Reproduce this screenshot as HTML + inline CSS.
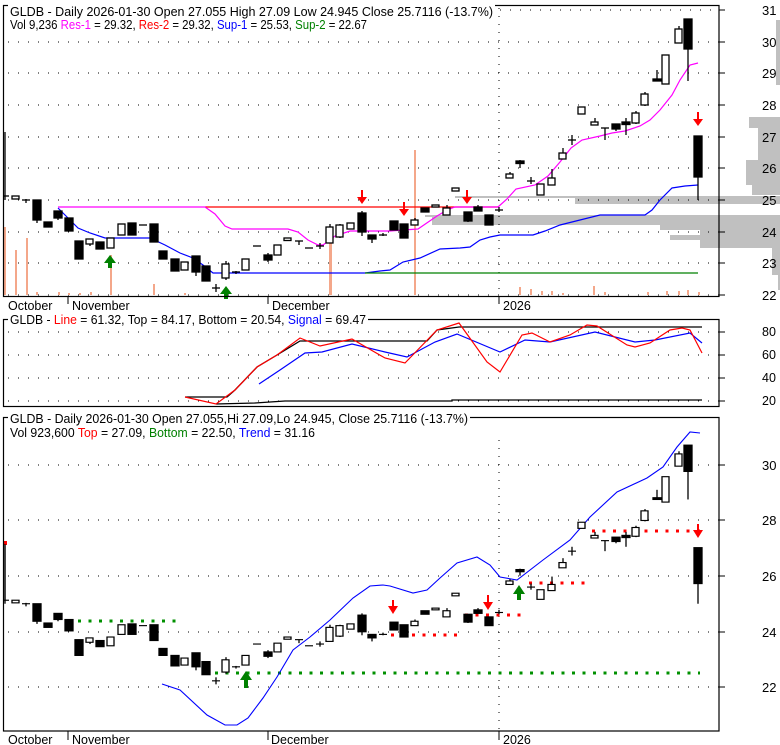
<!DOCTYPE html>
<html><head><meta charset="utf-8"><style>
html,body{margin:0;padding:0;background:#fff;width:780px;height:745px;overflow:hidden}
svg{display:block;font-family:"Liberation Sans",Arial,sans-serif}
</style></head><body>
<svg width="780" height="745" viewBox="0 0 780 745" xmlns="http://www.w3.org/2000/svg">
<defs>
<g id="candles" stroke="#000" stroke-width="1.3">
<line x1="5" y1="132" x2="5" y2="200" vector-effect="non-scaling-stroke"/><line x1="3" y1="196" x2="9" y2="196"/>
<rect x="12" y="196" width="7" height="3" fill="#fff"/>
<line x1="26" y1="199" x2="26" y2="203"/><line x1="22" y1="200" x2="30" y2="200"/>
<line x1="37" y1="200" x2="37" y2="223"/><rect x="33" y="200" width="8" height="20" fill="#000"/>
<rect x="44" y="222" width="8" height="5" fill="#000"/>
<line x1="58" y1="211" x2="58" y2="220"/><rect x="54" y="211" width="8" height="7" fill="#000"/>
<rect x="65" y="218" width="8" height="13" fill="#000"/>
<rect x="75" y="241" width="8" height="18" fill="#000"/>
<line x1="90" y1="239" x2="90" y2="246"/><rect x="86" y="239" width="7" height="5" fill="#fff"/>
<rect x="96" y="242" width="8" height="7" fill="#000"/>
<rect x="107" y="238" width="7" height="10" fill="#fff"/>
<rect x="118" y="224" width="7" height="11" fill="#fff"/>
<rect x="128" y="223" width="8" height="12" fill="#000"/>
<line x1="139" y1="225" x2="147" y2="225"/>
<rect x="150" y="224" width="8" height="18" fill="#000"/>
<rect x="159" y="251" width="8" height="8" fill="#000"/>
<rect x="171" y="259" width="8" height="12" fill="#000"/>
<rect x="181" y="262" width="7" height="8" fill="#fff"/>
<line x1="196" y1="256" x2="196" y2="276"/><rect x="192" y="256" width="8" height="16" fill="#000"/>
<rect x="202" y="266" width="8" height="15" fill="#000"/>
<line x1="216" y1="284" x2="216" y2="292"/><line x1="212" y1="288" x2="220" y2="288"/>
<line x1="226" y1="261" x2="226" y2="280"/><rect x="222" y="264" width="7" height="14" fill="#fff"/>
<line x1="236" y1="271" x2="236" y2="274"/><line x1="232" y1="272" x2="240" y2="272"/>
<rect x="242" y="259" width="7" height="11" fill="#fff"/>
<line x1="253" y1="246" x2="261" y2="246"/>
<line x1="268" y1="253" x2="268" y2="262"/><rect x="264" y="255" width="8" height="5" fill="#000"/>
<rect x="274" y="245" width="7" height="10" fill="#fff"/>
<rect x="284" y="238" width="7" height="2.5" fill="#fff"/>
<line x1="299" y1="241" x2="299" y2="245"/><line x1="295" y1="241" x2="303" y2="241"/>
<line x1="305" y1="248" x2="313" y2="248"/>
<line x1="320" y1="243" x2="320" y2="249"/><line x1="316" y1="246" x2="324" y2="246"/>
<line x1="330" y1="224" x2="330" y2="243"/><rect x="326" y="227" width="7" height="16" fill="#fff"/>
<line x1="340" y1="224" x2="340" y2="238"/><rect x="336" y="225" width="7" height="12" fill="#fff"/>
<rect x="347" y="223" width="7" height="6" fill="#fff"/>
<line x1="362" y1="211" x2="362" y2="236"/><rect x="358" y="213" width="8" height="19" fill="#000"/>
<line x1="372" y1="235" x2="372" y2="243"/><rect x="368" y="235" width="8" height="4" fill="#000"/>
<line x1="383" y1="233" x2="383" y2="236"/><line x1="379" y1="235" x2="387" y2="235"/>
<rect x="390" y="221" width="8" height="9" fill="#000"/>
<rect x="400" y="224" width="8" height="14" fill="#000"/>
<line x1="415" y1="218" x2="415" y2="225"/><rect x="411" y="220" width="7" height="5" fill="#fff"/>
<rect x="421" y="208" width="8" height="4" fill="#000"/>
<rect x="432" y="205" width="7" height="2" fill="#fff"/>
<line x1="447" y1="205" x2="447" y2="215"/><rect x="443" y="208" width="7" height="7" fill="#fff"/>
<rect x="452" y="188" width="7" height="3" fill="#fff"/>
<line x1="468" y1="212" x2="468" y2="222"/><rect x="464" y="212" width="8" height="9" fill="#000"/>
<line x1="478" y1="205" x2="478" y2="211"/><rect x="474" y="207" width="8" height="4" fill="#000"/>
<rect x="485" y="215" width="8" height="10" fill="#000"/>
<line x1="499" y1="207" x2="499" y2="212"/><line x1="495" y1="210" x2="503" y2="210"/>
<line x1="510" y1="172" x2="510" y2="174"/><rect x="506" y="174" width="7" height="4" fill="#fff"/>
<line x1="520" y1="160" x2="520" y2="168"/><rect x="516" y="161" width="8" height="2.5" fill="#000"/>
<line x1="531" y1="177" x2="531" y2="184"/><line x1="527" y1="181" x2="535" y2="181"/>
<rect x="537" y="184" width="7" height="11" fill="#fff"/>
<line x1="552" y1="169" x2="552" y2="185"/><rect x="548" y="178" width="7" height="7" fill="#fff"/>
<line x1="563" y1="148" x2="563" y2="159"/><rect x="559" y="153" width="7" height="6" fill="#fff"/>
<line x1="572" y1="135" x2="572" y2="145"/><line x1="568" y1="140" x2="576" y2="140"/>
<rect x="578" y="107" width="7" height="7" fill="#fff"/>
<line x1="595" y1="118" x2="595" y2="125"/><rect x="591" y="122" width="7" height="3" fill="#fff"/>
<line x1="605" y1="128" x2="605" y2="140"/><line x1="601" y1="128" x2="609" y2="128"/>
<line x1="616" y1="124" x2="616" y2="131"/><rect x="612" y="124" width="8" height="5" fill="#000"/>
<line x1="626" y1="118" x2="626" y2="135"/><rect x="622" y="122" width="8" height="2.5" fill="#000"/>
<line x1="636" y1="111" x2="636" y2="124"/><rect x="632" y="113" width="7" height="10" fill="#fff"/>
<line x1="645" y1="92" x2="645" y2="106"/><rect x="641" y="94" width="7" height="11" fill="#fff"/>
<line x1="657" y1="70" x2="657" y2="80"/><rect x="653" y="79" width="8" height="2" fill="#000"/>
<rect x="662" y="55" width="7" height="29" fill="#fff"/>
<line x1="679" y1="26" x2="679" y2="29"/><rect x="675" y="29" width="7" height="14" fill="#fff"/>
<line x1="688" y1="19" x2="688" y2="81"/><rect x="684" y="19" width="8" height="30" fill="#000"/>
<line x1="698" y1="136" x2="698" y2="200"/><rect x="694" y="136" width="8" height="41" fill="#000"/>
</g>
</defs>

<!-- ============ TOP PANEL ============ -->
<!-- volume profile -->
<g fill="#c0c0c0">
<rect x="776" y="20" width="4" height="65"/>
<rect x="749" y="117" width="31" height="11"/>
<rect x="758" y="128" width="22" height="32"/>
<rect x="746" y="160" width="34" height="25"/>
<rect x="752" y="185" width="28" height="10"/>
<rect x="455" y="196" width="325" height="2"/>
<rect x="575" y="196" width="205" height="8"/>
<rect x="425" y="215" width="355" height="2"/>
<rect x="432" y="217" width="348" height="8"/>
<rect x="660" y="225" width="120" height="5"/>
<rect x="700" y="230" width="80" height="18"/>
<rect x="670" y="235" width="50" height="5"/>
<rect x="772" y="248" width="8" height="27"/>
<rect x="778" y="275" width="2" height="15"/>
</g>
<!-- grid -->
<g stroke="#000" stroke-width="1" stroke-dasharray="1,9">
<line x1="8" y1="42" x2="719" y2="42"/><line x1="8" y1="73" x2="719" y2="73"/>
<line x1="8" y1="105" x2="719" y2="105"/><line x1="8" y1="137" x2="719" y2="137"/>
<line x1="8" y1="168" x2="719" y2="168"/><line x1="8" y1="200" x2="719" y2="200"/>
<line x1="8" y1="232" x2="719" y2="232"/><line x1="8" y1="263" x2="719" y2="263"/>
<line x1="8" y1="295" x2="719" y2="295"/><line x1="320" y1="10" x2="719" y2="10"/>
<line x1="499" y1="8" x2="499" y2="296" stroke-dasharray="1,7"/>
</g>
<!-- volume bars -->
<g fill="#f4a78a">
<rect x="4" y="227" width="2" height="68"/><rect x="15" y="250" width="2" height="45"/>
<rect x="26" y="238" width="2" height="57"/><rect x="36" y="292" width="2" height="3"/>
<rect x="110" y="255" width="2" height="40"/><rect x="153" y="284" width="2" height="11"/>
<rect x="329" y="230" width="3" height="65"/><rect x="414" y="150" width="2" height="145"/>
<rect x="519" y="287" width="2" height="8"/><rect x="530" y="289" width="2" height="6"/>
<rect x="593" y="286" width="2" height="9"/><rect x="666" y="291" width="2" height="4"/>
<rect x="678" y="291" width="2" height="4"/><rect x="687" y="290" width="2" height="5"/>
<rect x="58" y="292" width="2" height="3"/><rect x="68" y="293" width="2" height="2"/>
<rect x="79" y="293" width="2" height="2"/><rect x="90" y="292" width="2" height="3"/>
<rect x="184" y="293" width="2" height="2"/><rect x="541" y="291" width="2" height="4"/>
<rect x="551" y="291" width="2" height="4"/><rect x="562" y="293" width="2" height="2"/>
<rect x="604" y="292" width="2" height="3"/><rect x="647" y="292" width="2" height="3"/>
<rect x="698" y="292" width="2" height="3"/>
</g>
<!-- indicator lines -->
<polyline fill="none" stroke="#0000ff" stroke-width="1.2" points="58,208 68,218 78,228 90,233 105,238 150,238 165,245 180,253 193,258 203,265 213,273 365,273 380,271 390,270 403,262 420,258 440,249 460,248 470,247 480,240 490,237 500,235 533,235 545,231 560,225 580,220 600,215 645,215 652,210 660,200 672,188 685,186 698,185"/>
<line x1="365" y1="273" x2="698" y2="273" stroke="#008000" stroke-width="1.2"/>
<line x1="205" y1="207" x2="498" y2="207" stroke="#ff0000" stroke-width="1.2"/>
<polyline fill="none" stroke="#ff00ff" stroke-width="1.2" points="58,207 205,207 215,214 225,226 232,229 288,229 298,232 308,240 318,245 323,245 335,236 350,231 390,231 403,230 418,229 437,216 447,210 455,207 498,207 507,199 516,189 535,185 548,176 560,162 571,148 582,140 600,136 612,133 625,131 640,126 650,120 660,110 672,95 680,80 690,65 698,63"/>
<g stroke="#000" stroke-width="1.3"><use href="#candles"/></g>
<!-- arrows -->
<g>
<polygon fill="#008000" points="110,255 116,263 112,263 112,268 108,268 108,263 104,263"/>
<polygon fill="#008000" points="226,286 232,294 228,294 228,299 224,299 224,294 220,294"/>
<polygon fill="#ff0000" points="361,190 363,190 363,197 367,197 362,204 357,197 361,197"/>
<polygon fill="#ff0000" points="403,202 405,202 405,209 409,209 404,216 399,209 403,209"/>
<polygon fill="#ff0000" points="466,190 468,190 468,197 472,197 467,204 462,197 466,197"/>
<polygon fill="#ff0000" points="697,112 699,112 699,119 703,119 698,126 693,119 697,119"/>
</g>
<!-- frame -->
<rect x="3.5" y="5.5" width="715.5" height="291" fill="none" stroke="#000" stroke-width="1.2"/>
<rect x="8" y="0" width="487" height="30" fill="#fff"/>
<rect x="8" y="18" width="365" height="14" fill="#fff"/>
<g font-size="12.5" fill="#000">
<text x="10" y="16" textLength="483" lengthAdjust="spacingAndGlyphs">GLDB - Daily 2026-01-30 Open 27.055  High 27.09  Low 24.945  Close 25.7116 (-13.7%)</text>
<text x="10" y="29" textLength="357" lengthAdjust="spacingAndGlyphs">Vol 9,236 <tspan fill="#ff00ff">Res-1</tspan> = 29.32, <tspan fill="#ff0000">Res-2</tspan> = 29.32, <tspan fill="#0000ff">Sup-1</tspan> = 25.53, <tspan fill="#008000">Sup-2</tspan> = 22.67</text>
</g>
<!-- right axis -->
<g stroke="#000" stroke-width="1">
<line x1="719" y1="10" x2="725" y2="10"/><line x1="719" y1="42" x2="725" y2="42"/><line x1="719" y1="73" x2="725" y2="73"/><line x1="719" y1="105" x2="725" y2="105"/><line x1="719" y1="137" x2="725" y2="137"/><line x1="719" y1="168" x2="725" y2="168"/><line x1="719" y1="200" x2="725" y2="200"/><line x1="719" y1="232" x2="725" y2="232"/><line x1="719" y1="263" x2="725" y2="263"/><line x1="719" y1="295" x2="725" y2="295"/>
</g>
<g font-size="13" fill="#000">
<text x="762" y="15">31</text><text x="762" y="47">30</text><text x="762" y="78">29</text><text x="762" y="110">28</text><text x="762" y="142">27</text><text x="762" y="173">26</text><text x="762" y="205">25</text><text x="762" y="237">24</text><text x="762" y="268">23</text><text x="762" y="300">22</text>
</g>
<!-- month labels -->
<g stroke="#000"><line x1="68" y1="296" x2="68" y2="304"/><line x1="268" y1="296" x2="268" y2="304"/><line x1="499" y1="296" x2="499" y2="304"/></g>
<g font-size="12.5" fill="#000"><text x="8" y="310">October</text><text x="72" y="310">November</text><text x="272" y="310">December</text><text x="503" y="310">2026</text></g>

<!-- ============ PANEL 2 ============ -->
<g stroke="#000" stroke-width="1" stroke-dasharray="1,9">
<line x1="8" y1="332" x2="719" y2="332"/><line x1="8" y1="355" x2="719" y2="355"/><line x1="8" y1="378" x2="719" y2="378"/><line x1="8" y1="401" x2="719" y2="401"/>
</g>
<polyline fill="none" stroke="#000" stroke-width="1.3" points="185,397 227,397 235,390 257,367 277,355 300,341 427,341 437,330 459,327 702,327"/>
<polyline fill="none" stroke="#000" stroke-width="1.3" points="216,404 255,403 285,401 452,401 452,400 702,400"/>
<polyline fill="none" stroke="#0000ff" stroke-width="1.2" points="259,384 280,370 305,353 322,352 352,344 385,352 407,357 435,342 457,334 500,352 525,340 550,342 595,332 635,342 655,340 690,333 702,343"/>
<polyline fill="none" stroke="#ff0000" stroke-width="1.2" points="185,397 216,404 235,390 257,367 277,355 300,338 320,346 352,339 385,358 405,363 437,330 459,323 487,362 500,372 522,335 532,333 550,342 570,335 587,325 597,326 627,345 635,347 650,343 670,330 682,328 690,330 702,353"/>
<rect x="3.5" y="319.5" width="715.5" height="87" fill="none" stroke="#000" stroke-width="1.2"/>
<rect x="8" y="312" width="360" height="15" fill="#fff"/>
<text x="10" y="324" font-size="12.5" textLength="356" lengthAdjust="spacingAndGlyphs">GLDB - <tspan fill="#ff0000">Line</tspan> = 61.32, Top = 84.17, Bottom = 20.54, <tspan fill="#0000ff">Signal</tspan> = 69.47</text>
<g stroke="#000"><line x1="719" y1="332" x2="725" y2="332"/><line x1="719" y1="355" x2="725" y2="355"/><line x1="719" y1="378" x2="725" y2="378"/><line x1="719" y1="401" x2="725" y2="401"/></g>
<g font-size="12.5"><text x="762" y="336">80</text><text x="762" y="359">60</text><text x="762" y="382">40</text><text x="762" y="405">20</text></g>

<!-- ============ PANEL 3 ============ -->
<g stroke="#000" stroke-width="1" stroke-dasharray="1,9">
<line x1="8" y1="465" x2="719" y2="465"/><line x1="8" y1="520" x2="719" y2="520"/><line x1="8" y1="576" x2="719" y2="576"/><line x1="8" y1="632" x2="719" y2="632"/><line x1="8" y1="687" x2="719" y2="687"/>
<line x1="499" y1="440" x2="499" y2="731" stroke-dasharray="1,7"/>
</g>
<!-- green dots -->
<g stroke="#009000" stroke-width="3" stroke-dasharray="3,7.5">
<line x1="78" y1="621" x2="178" y2="621"/>
<line x1="215" y1="673" x2="700" y2="673"/>
</g>
<g stroke="#ff0000" stroke-width="3" stroke-dasharray="3,7.5">
<line x1="391" y1="635" x2="462" y2="635"/>
<line x1="465" y1="615" x2="523" y2="615"/>
<line x1="529" y1="583" x2="586" y2="583"/>
<line x1="592" y1="531" x2="702" y2="531"/>
</g>
<polyline fill="none" stroke="#0000ff" stroke-width="1.1" points="162,684 180,690 207,715 225,725 237,725 248,718 263,698 277,677 293,650 310,637 330,620 353,598 370,586 383,585 390,586 413,593 427,590 440,578 457,563 477,557 490,565 500,577 517,580 543,560 570,540 590,517 617,492 647,478 663,467 677,447 690,432 700,433"/>
<line x1="5" y1="543" x2="5" y2="600" stroke="#000" stroke-width="1.2"/>
<rect x="3" y="541" width="4" height="4" fill="#ff0000"/>
<g transform="matrix(1,0,0,0.8762,0,428.49)"><g stroke-width="1.3"><use href="#candles"/></g></g>
<g>
<polygon fill="#008000" points="246,671 252,680 248,680 248,688 244,688 244,680 240,680"/>
<polygon fill="#008000" points="519,585 525,594 521,594 521,600 517,600 517,594 513,594"/>
<polygon fill="#ff0000" points="392,600 394,600 394,606 398,606 393,614 388,606 392,606"/>
<polygon fill="#ff0000" points="487,595 489,595 489,602 493,602 488,610 483,602 487,602"/>
<polygon fill="#ff0000" points="697,524 699,524 699,530 703,530 698,538 693,530 697,530"/>
</g>
<rect x="3.5" y="417.5" width="715.5" height="313.5" fill="none" stroke="#000" stroke-width="1.2"/>
<rect x="8" y="410" width="462" height="30" fill="#fff"/>
<g font-size="12.5">
<text x="10" y="423" textLength="458" lengthAdjust="spacingAndGlyphs">GLDB - Daily 2026-01-30 Open 27.055,Hi 27.09,Lo 24.945, Close 25.7116 (-13.7%)</text>
<text x="10" y="437" textLength="305" lengthAdjust="spacingAndGlyphs">Vol 923,600 <tspan fill="#ff0000">Top</tspan> = 27.09, <tspan fill="#008000">Bottom</tspan> = 22.50, <tspan fill="#0000ff">Trend</tspan> = 31.16</text>
</g>
<g stroke="#000"><line x1="719" y1="465" x2="725" y2="465"/><line x1="719" y1="520" x2="725" y2="520"/><line x1="719" y1="576" x2="725" y2="576"/><line x1="719" y1="632" x2="725" y2="632"/><line x1="719" y1="687" x2="725" y2="687"/></g>
<g font-size="13"><text x="762" y="470">30</text><text x="762" y="525">28</text><text x="762" y="581">26</text><text x="762" y="637">24</text><text x="762" y="692">22</text></g>
<g stroke="#000"><line x1="68" y1="731" x2="68" y2="740"/><line x1="268" y1="731" x2="268" y2="740"/><line x1="499" y1="731" x2="499" y2="740"/></g>
<g font-size="12.5"><text x="8" y="744">October</text><text x="72" y="744">November</text><text x="271" y="744">December</text><text x="503" y="744">2026</text></g>
</svg>
</body></html>
